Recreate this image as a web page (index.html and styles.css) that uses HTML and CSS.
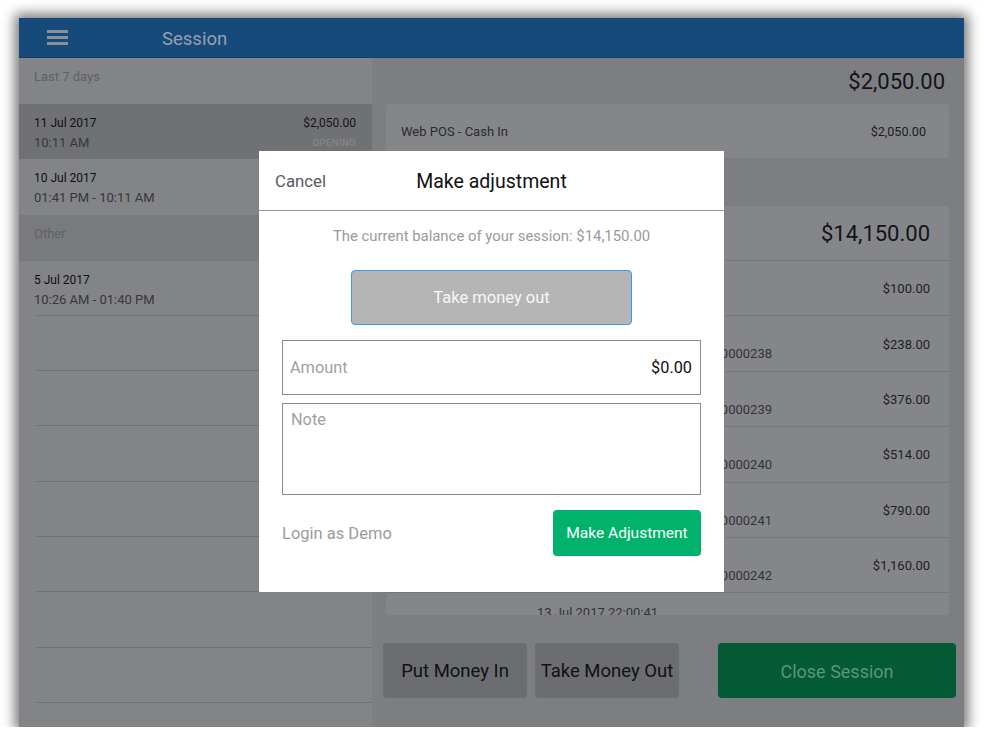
FILE: index.html
```html
<!DOCTYPE html>
<html lang="en">
<head>
<meta charset="utf-8">
<title>Session</title>
<link rel="stylesheet" href="styles.css">
</head>
<body>
<div class="device">
  <header class="topbar">
    <div class="menu"><span></span><span></span><span></span></div>
    <h1 class="title">Session</h1>
  </header>
  <div class="main">
    <aside class="sidebar">
      <div class="group-label">Last 7 days</div>
      <div class="session active">
        <div class="s-info"><div class="s-date">11 Jul 2017</div><div class="s-time">10:11 AM</div></div>
        <div class="s-side"><div class="s-amt">$2,050.00</div><div class="s-status">OPENING</div></div>
      </div>
      <div class="session">
        <div class="s-info"><div class="s-date">10 Jul 2017</div><div class="s-time">01:41 PM - 10:11 AM</div></div>
      </div>
      <div class="group-label dark">Other</div>
      <div class="session line">
        <div class="s-info"><div class="s-date">5 Jul 2017</div><div class="s-time">10:26 AM - 01:40 PM</div></div>
      </div>
      <div class="session line"></div>
      <div class="session line"></div>
      <div class="session line"></div>
      <div class="session line"></div>
      <div class="session line"></div>
      <div class="session line"></div>
      <div class="session line"></div>
    </aside>
    <section class="detail">
      <div class="detail-scroll">
        <div class="total">$2,050.00</div>
        <div class="card opening">
          <span class="c-title">Web POS - Cash In</span>
          <span class="c-amt">$2,050.00</span>
        </div>
        <div class="card tx-card">
          <div class="tx-head">$14,150.00</div>
          <div class="tx">
            <div class="tx-info"><div class="tx-date">13 Jul 2017 21:58:02</div></div>
            <div class="tx-amt">$100.00</div>
          </div>
          <div class="tx">
            <div class="tx-info"><div class="tx-date">13 Jul 2017 21:58:40</div><div class="tx-id">Order #000000238</div></div>
            <div class="tx-amt">$238.00</div>
          </div>
          <div class="tx">
            <div class="tx-info"><div class="tx-date">13 Jul 2017 21:59:12</div><div class="tx-id">Order #000000239</div></div>
            <div class="tx-amt">$376.00</div>
          </div>
          <div class="tx">
            <div class="tx-info"><div class="tx-date">13 Jul 2017 21:59:37</div><div class="tx-id">Order #000000240</div></div>
            <div class="tx-amt">$514.00</div>
          </div>
          <div class="tx">
            <div class="tx-info"><div class="tx-date">13 Jul 2017 22:00:05</div><div class="tx-id">Order #000000241</div></div>
            <div class="tx-amt">$790.00</div>
          </div>
          <div class="tx">
            <div class="tx-info"><div class="tx-date">13 Jul 2017 22:00:22</div><div class="tx-id">Order #000000242</div></div>
            <div class="tx-amt">$1,160.00</div>
          </div>
          <div class="tx">
            <div class="tx-info"><div class="tx-date">13 Jul 2017 22:00:41</div></div>
          </div>
        </div>
      </div>
      <div class="actions">
        <button class="btn gray">Put Money In</button>
        <button class="btn gray">Take Money Out</button>
        <button class="btn close">Close Session</button>
      </div>
    </section>
  </div>
  <div class="overlay">
    <div class="modal">
      <div class="m-head">
        <span class="m-cancel">Cancel</span>
        <span class="m-title">Make adjustment</span>
        <span></span>
      </div>
      <div class="m-body">
        <p class="m-balance">The current balance of your session: $14,150.00</p>
        <button class="m-type">Take money out</button>
        <div class="field amount"><span class="ph">Amount</span><span class="val">$0.00</span></div>
        <div class="field note"><span class="ph">Note</span></div>
        <div class="m-foot">
          <span class="m-login">Login as Demo</span>
          <button class="m-submit">Make Adjustment</button>
        </div>
      </div>
    </div>
  </div>
</div>
</body>
</html>
```

FILE: styles.css
```css
* { box-sizing: border-box; }

body {
  margin: 0;
  padding: 18px 0 0 19px;
  background: #ffffff;
  font-family: Roboto, "Noto Sans", sans-serif;
}

.device {
  position: relative;
  width: 945px;
  height: 709px;
  display: flex;
  flex-direction: column;
  background: #838488;
  box-shadow: 0 0 12px 4px rgba(0, 0, 0, 0.55);
  overflow: hidden;
}

/* top bar */
.topbar {
  height: 40px;
  flex: none;
  display: flex;
  align-items: center;
  padding-left: 28px;
  background: #154a7b;
  border-bottom: 1px solid #133f68;
}

.menu {
  width: 21px;
  display: flex;
  flex-direction: column;
  gap: 3px;
}

.menu span {
  display: block;
  height: 3px;
  background: #8a9099;
}

.title {
  margin: 2px 0 0 94px;
  font-size: 18.5px;
  font-weight: 400;
  color: #97a0ac;
}

.main {
  flex: 1;
  display: flex;
  min-height: 0;
}

/* sidebar */
.sidebar {
  width: 353px;
  flex: none;
  background: #838488;
  overflow: hidden;
}

.group-label {
  height: 46px;
  padding: 11px 15px 0;
  font-size: 13px;
  line-height: 16px;
  color: #606165;
}

.group-label.dark {
  background: #797a7e;
}

.session {
  height: 55.3px;
  padding: 10px 16px 0 15px;
  display: flex;
  justify-content: space-between;
  line-height: 19px;
}

.session.active {
  background: #707175;
}

.session.line {
  background: linear-gradient(#6e6f73, #6e6f73) no-repeat 18px 100% / calc(100% - 18px) 1px;
}

.s-date {
  font-size: 12px;
  color: #0f0f10;
}

.s-time {
  font-size: 13px;
  color: #36373a;
}

.s-side {
  text-align: right;
}

.s-amt {
  font-size: 12px;
  color: #141415;
}

.s-status {
  font-size: 9.5px;
  color: #8a8b8f;
  letter-spacing: 0.4px;
}

/* detail */
.detail {
  flex: 1;
  display: flex;
  flex-direction: column;
  background: #7d7e82;
  min-width: 0;
}

.detail-scroll {
  flex: 1;
  min-height: 0;
  display: flex;
  flex-direction: column;
  padding: 0 15px 0 14px;
  overflow: hidden;
}

.total {
  height: 46px;
  flex: none;
  display: flex;
  align-items: center;
  justify-content: flex-end;
  padding: 1px 4px 0 0;
  font-size: 22px;
  color: #141415;
}

.card {
  background: #85868a;
  border-radius: 4px;
}

.opening {
  height: 54px;
  flex: none;
  display: flex;
  align-items: center;
  justify-content: space-between;
  padding: 1px 23px 0 15px;
  font-size: 13px;
}

.c-title { color: #2a2b2e; }
.c-amt { color: #1b1c1e; font-size: 12.6px; }

.tx-card {
  flex: 1;
  min-height: 0;
  margin-top: 48px;
  overflow: hidden;
}

.tx-head {
  height: 55px;
  display: flex;
  align-items: center;
  justify-content: flex-end;
  padding: 1px 19px 0 0;
  border-bottom: 1px solid #76777b;
  font-size: 22px;
  color: #141415;
}

.tx {
  height: 55.4px;
  display: flex;
  align-items: center;
  padding: 1px 19px 0 151px;
  border-bottom: 1px solid #76777b;
}

.tx-info {
  width: 235px;
  align-self: flex-start;
  padding-top: 10px;
  font-size: 13px;
  line-height: 18px;
  color: #323336;
}

.tx-id { text-align: right; }

.tx-amt {
  margin-left: auto;
  font-size: 13px;
  color: #1d1e20;
}

/* bottom actions */
.actions {
  height: 112px;
  flex: none;
  display: flex;
  gap: 8px;
  padding: 28px 8px 0 11px;
}

.btn {
  height: 55px;
  border: none;
  border-radius: 4px;
  font-family: inherit;
  font-size: 18.5px;
  padding: 1px 0 0;
}

.btn.gray {
  width: 144px;
  background: #6c6d71;
  color: #111112;
}

.btn.close {
  width: 238px;
  margin-left: auto;
  background: #035a34;
  color: #5b9676;
  font-size: 18px;
}

/* modal */
.overlay {
  position: absolute;
  inset: 0;
  display: flex;
  justify-content: center;
  align-items: flex-start;
  padding-top: 133px;
}

.modal {
  width: 465px;
  height: 441px;
  background: #ffffff;
}

.m-head {
  height: 60px;
  display: grid;
  grid-template-columns: 1fr auto 1fr;
  align-items: center;
  padding: 1px 16px 0;
  border-bottom: 1px solid #9a9a9a;
}

.m-cancel {
  font-size: 16.8px;
  color: #59595b;
}

.m-title {
  font-size: 19.5px;
  color: #111111;
}

.m-body {
  display: flex;
  flex-direction: column;
  padding: 0 23px;
}

.m-balance {
  margin: 15px 0 0;
  text-align: center;
  font-size: 14.9px;
  line-height: 20px;
  color: #9a9a9c;
}

.m-type {
  align-self: center;
  width: 281px;
  height: 55px;
  margin-top: 24px;
  background: #b5b5b5;
  border: 1px solid #3d9be9;
  border-radius: 4px;
  font-family: inherit;
  font-size: 16.5px;
  color: #f7f7f7;
}

.field {
  border: 1px solid #8c8c8e;
  font-size: 16.3px;
}

.field.amount {
  height: 55px;
  margin-top: 15px;
  display: flex;
  align-items: center;
  justify-content: space-between;
  padding: 0 8px 0 7px;
}

.field.note {
  height: 92px;
  margin-top: 8px;
  padding: 6px 8px;
  line-height: 20px;
}

.ph { color: #a0a0a2; }
.val { color: #0e0e0e; }

.m-foot {
  margin-top: 15px;
  display: flex;
  align-items: center;
  justify-content: space-between;
}

.m-login {
  font-size: 16.5px;
  color: #9b9b9d;
}

.m-submit {
  width: 148px;
  height: 46px;
  border: none;
  border-radius: 4px;
  background: #00b26b;
  color: #ffffff;
  font-family: inherit;
  font-size: 15.5px;
  padding: 0;
}
```
